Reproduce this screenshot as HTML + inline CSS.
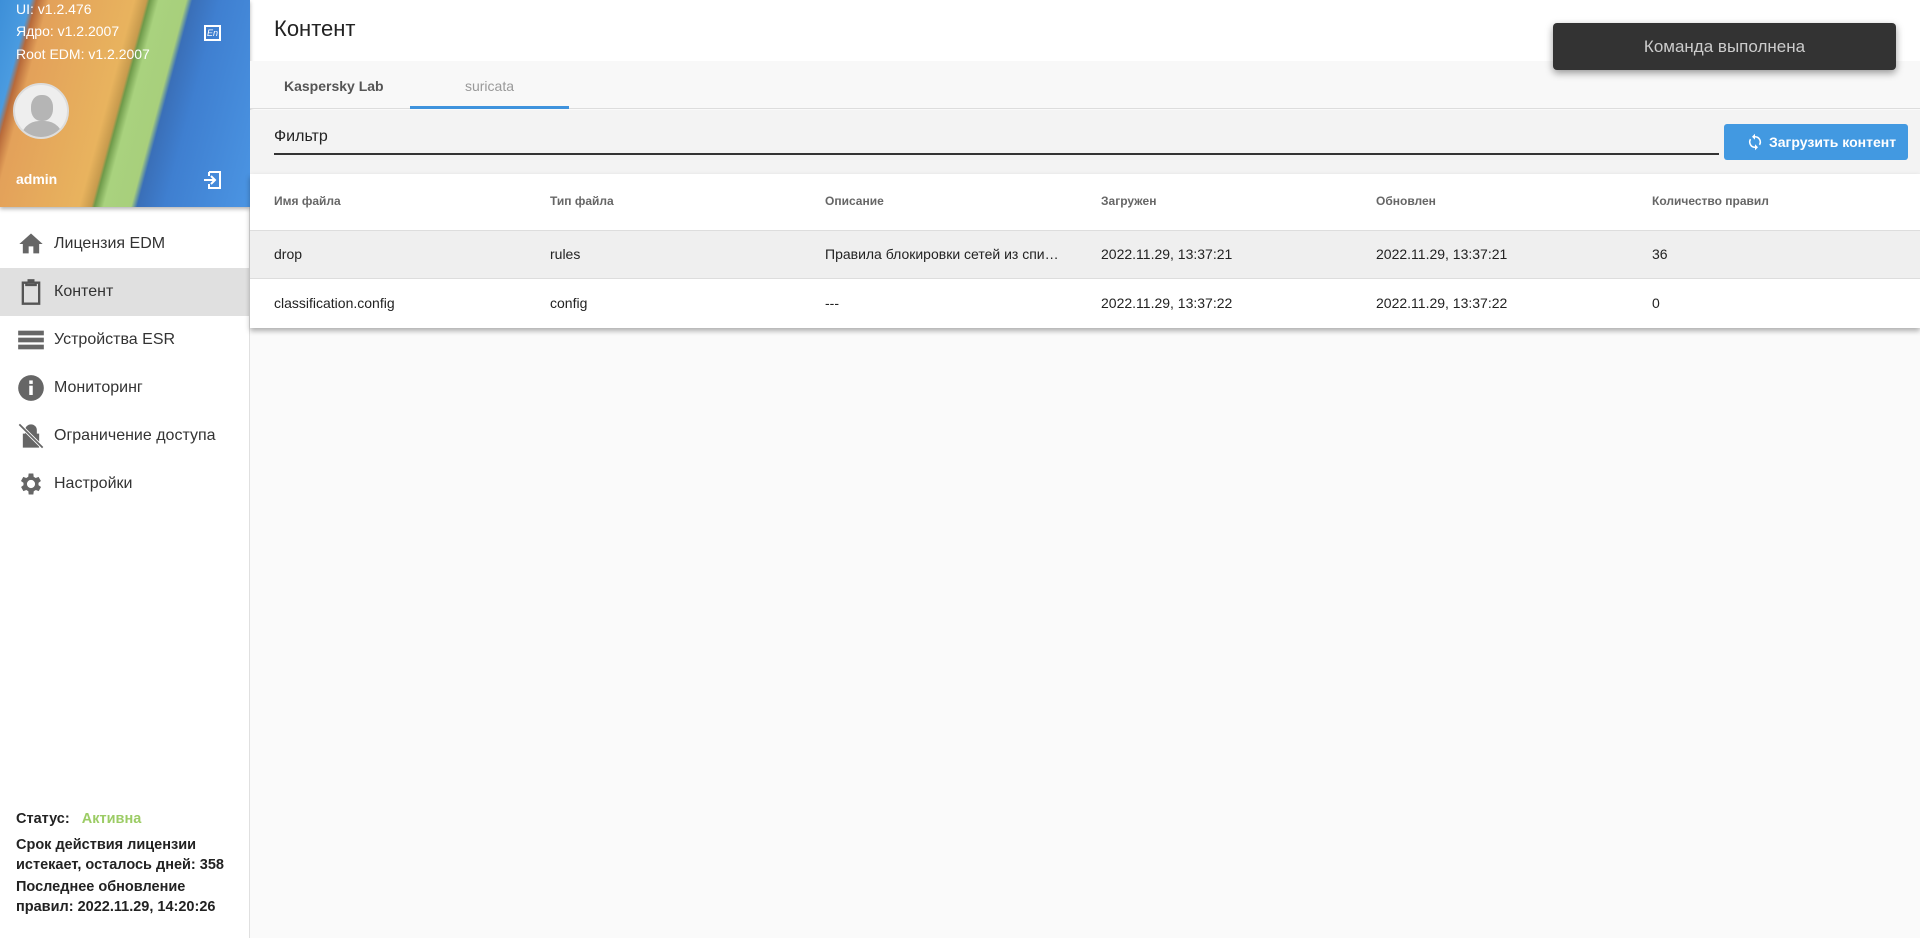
<!DOCTYPE html>
<html><head><meta charset="utf-8"><style>
*{box-sizing:border-box;margin:0;padding:0}
body{width:1920px;height:938px;overflow:hidden;font-family:"Liberation Sans",Arial,sans-serif;background:#fafafa;position:relative;color:#222}
#top{position:absolute;left:250px;top:0;width:1670px;height:61px;background:#fff}
#side{position:absolute;left:0;top:0;width:250px;height:938px;background:#fff;border-right:1px solid #e0e0e0}
#hdr{position:absolute;left:0;top:0;width:250px;height:207px;background:linear-gradient(105deg,#3d8fd8 0%,#4a9be0 10%,#b7693a 12%,#e3a15a 16%,#e8b35e 44%,#c79a4d 48%,#6e9a4a 49%,#a9d27e 52%,#a8cf7c 61%,#3a6fb8 63%,#3f7fd0 72%,#4b95e3 100%);box-shadow:0 2px 4px rgba(0,0,0,.3)}
.ver{position:absolute;left:16px;color:#fff;font-size:14px}
#av{position:absolute;left:13px;top:83px;width:56px;height:56px;border-radius:50%;background:#eee;border:2px solid #ddd;overflow:hidden}
.mi{position:absolute;left:0;width:249px;height:48px;font-size:16px;color:#333}
.mi span{position:absolute;left:54px;top:15px}
.mi svg{position:absolute;left:17px;top:10px}
.st{position:absolute;left:16px;font-size:14.5px;font-weight:bold;color:#222;line-height:20px}
#title{position:absolute;left:274px;top:16px;font-size:22px;color:#222}
#tabs{position:absolute;left:250px;top:61px;width:1670px;height:48px;background:#f8f8f8;border-bottom:1px solid #ddd}
#filt{position:absolute;left:250px;top:110px;width:1670px;height:64px;background:#f3f3f3}
#tbl{position:absolute;left:250px;top:174px;width:1670px;height:154px;background:#fff;box-shadow:0 3px 5px rgba(0,0,0,.3)}
.c{position:absolute;font-size:14px;color:#222}
.h{font-size:12px;color:#666;font-weight:bold}
#toast{position:absolute;left:1553px;top:23px;width:343px;height:47px;background:#333;border-radius:4px;box-shadow:0 3px 8px rgba(0,0,0,.4);color:#ccc;font-size:17px;text-align:center;line-height:47px}
</style></head><body>
<div id="top"></div>
<div id="side">
 <div id="hdr">
  <div class="ver" style="top:1px">UI: v1.2.476</div>
  <div class="ver" style="top:23px">Ядро: v1.2.2007</div>
  <div class="ver" style="top:46px">Root EDM: v1.2.2007</div>
  <div style="position:absolute;left:204px;top:25px;width:17px;height:16px;border:2px solid #fff;color:#fff;font-size:9px;line-height:12px;text-align:center;font-style:italic">En</div>
  <div id="av"><div style="position:absolute;left:16px;top:10px;width:22px;height:26px;border-radius:45%;background:#b5b5b5"></div><div style="position:absolute;left:6px;top:36px;width:42px;height:30px;border-radius:18px 18px 0 0;background:#b5b5b5"></div></div>
  <div class="ver" style="top:171px;font-weight:bold">admin</div>
  <svg style="position:absolute;left:203px;top:170px" width="20" height="20" viewBox="0 0 20 20"><path d="M6 2H17V18H6V14M6 6V2M1 10H12M8 6L12 10L8 14" fill="none" stroke="#fff" stroke-width="2"/></svg>
 </div>
 <div class="mi" style="top:220px"><svg width="28" height="28" viewBox="0 0 24 24"><path d="M10 20v-6h4v6h5v-8h3L12 3 2 12h3v8z" fill="#666"/></svg><span>Лицензия EDM</span></div>
 <div class="mi" style="top:268px;background:#e0e0e0"><svg width="28" height="28" viewBox="0 0 24 24"><path d="M5 4h3v2h8V4h3v18H5z" fill="none" stroke="#555" stroke-width="2"/><rect x="9" y="1" width="6" height="4" fill="#555"/></svg><span>Контент</span></div>
 <div class="mi" style="top:316px"><svg width="28" height="28" viewBox="0 0 24 24"><rect x="1" y="4" width="22" height="4" fill="#666"/><rect x="1" y="10" width="22" height="4" fill="#666"/><rect x="1" y="16" width="22" height="4" fill="#666"/></svg><span>Устройства ESR</span></div>
 <div class="mi" style="top:364px"><svg width="28" height="28" viewBox="0 0 24 24"><circle cx="12" cy="12" r="11" fill="#666"/><rect x="10.5" y="10" width="3" height="8" fill="#fff"/><rect x="10.5" y="5.5" width="3" height="3" fill="#fff"/></svg><span>Мониторинг</span></div>
 <div class="mi" style="top:412px"><svg width="28" height="28" viewBox="0 0 24 24"><path d="M7 10V7a5 5 0 0 1 10 0v3h2v12H5V10z" fill="#666"/><path d="M2 2L22 22" stroke="#fff" stroke-width="3"/><path d="M2 2L22 22" stroke="#666" stroke-width="1.5"/></svg><span>Ограничение доступа</span></div>
 <div class="mi" style="top:460px"><svg width="28" height="28" viewBox="0 0 24 24"><path d="M19.4 13a7.5 7.5 0 0 0 0-2l2.1-1.6-2-3.5-2.5 1a7 7 0 0 0-1.7-1L15 3h-4l-.4 2.9a7 7 0 0 0-1.7 1l-2.5-1-2 3.5L6.6 11a7.5 7.5 0 0 0 0 2l-2.1 1.6 2 3.5 2.5-1a7 7 0 0 0 1.7 1L11 21h4l.4-2.9a7 7 0 0 0 1.7-1l2.5 1 2-3.5zM13 15.5a3.5 3.5 0 1 1 0-7 3.5 3.5 0 0 1 0 7z" fill="#666" transform="translate(-1 0)"/></svg><span>Настройки</span></div>
 <div class="st" style="top:809px">Статус:&nbsp;&nbsp; <span style="color:#9ccc65">Активна</span></div>
 <div class="st" style="top:835px">Срок действия лицензии<br>истекает, осталось дней: 358</div>
 <div class="st" style="top:877px">Последнее обновление<br>правил: 2022.11.29, 14:20:26</div>
</div>
<div id="title">Контент</div>
<div id="tabs">
 <div style="position:absolute;left:34px;top:17px;font-size:14px;font-weight:bold;color:#555">Kaspersky Lab</div>
 <div style="position:absolute;left:160px;top:17px;width:159px;text-align:center;font-size:14px;color:#999">suricata</div>
 <div style="position:absolute;left:160px;top:45px;width:159px;height:3px;background:#3f93dd"></div>
</div>
<div id="filt">
 <div style="position:absolute;left:24px;top:18px;font-size:16px;color:#222">Фильтр</div>
 <div style="position:absolute;left:24px;top:43px;width:1445px;height:2px;background:#333"></div>
 <div style="position:absolute;left:1474px;top:14px;width:184px;height:36px;background:#4299e1;border-radius:3px;color:#fff;font-size:14px;font-weight:bold;line-height:36px;padding-left:45px">
  <svg style="position:absolute;left:22px;top:9px" width="18" height="18" viewBox="0 0 24 24"><path d="M12 4V1L8 5l4 4V6a6 6 0 0 1 5.2 9l1.5 1.5A8 8 0 0 0 12 4zm0 14a6 6 0 0 1-5.2-9L5.3 7.5A8 8 0 0 0 12 20v3l4-4-4-4z" fill="#fff"/></svg>Загрузить контент</div>
</div>
<div id="tbl">
 <div class="c h" style="left:24px;top:20px">Имя файла</div>
 <div class="c h" style="left:300px;top:20px">Тип файла</div>
 <div class="c h" style="left:575px;top:20px">Описание</div>
 <div class="c h" style="left:851px;top:20px">Загружен</div>
 <div class="c h" style="left:1126px;top:20px">Обновлен</div>
 <div class="c h" style="left:1402px;top:20px">Количество правил</div>
 <div style="position:absolute;left:0;top:56px;width:1670px;height:49px;background:#efefef;border-top:1px solid #ddd;border-bottom:1px solid #ddd"></div>
 <div class="c" style="left:24px;top:72px">drop</div>
 <div class="c" style="left:300px;top:72px">rules</div>
 <div class="c" style="left:575px;top:72px">Правила блокировки сетей из спи…</div>
 <div class="c" style="left:851px;top:72px">2022.11.29, 13:37:21</div>
 <div class="c" style="left:1126px;top:72px">2022.11.29, 13:37:21</div>
 <div class="c" style="left:1402px;top:72px">36</div>
 <div class="c" style="left:24px;top:121px">classification.config</div>
 <div class="c" style="left:300px;top:121px">config</div>
 <div class="c" style="left:575px;top:121px">---</div>
 <div class="c" style="left:851px;top:121px">2022.11.29, 13:37:22</div>
 <div class="c" style="left:1126px;top:121px">2022.11.29, 13:37:22</div>
 <div class="c" style="left:1402px;top:121px">0</div>
</div>
<div id="toast">Команда выполнена</div>
</body></html>
